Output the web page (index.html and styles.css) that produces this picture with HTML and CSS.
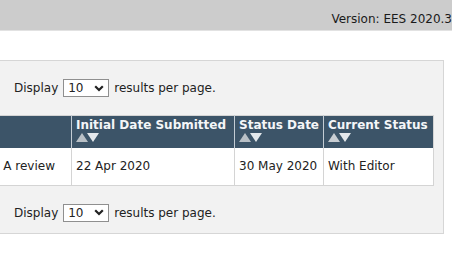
FILE: index.html
```html
<!DOCTYPE html>
<html lang="en">
<head>
    <meta charset="UTF-8">
    <meta name="viewport" content="width=device-width, initial-scale=1.0">
    <title>Submissions</title>
    <link rel="stylesheet" href="styles.css">
</head>
<body>
    <div class="topbar">
        <span class="version">Version: EES 2020.3</span>
    </div>

    <div class="panel">
        <div class="display-row">
            <span>Display</span>
            <span class="fake-select">10
                <svg width="10" height="7" viewBox="0 0 10 7"><path d="M1.2 1.2 L5 5 L8.8 1.2" fill="none" stroke="#222" stroke-width="2.2"/></svg>
            </span>
            <span>results per page.</span>
        </div>

        <table class="results">
            <colgroup>
                <col class="w-status">
                <col class="w-initial">
                <col class="w-date">
                <col class="w-current">
            </colgroup>
            <tr>
                <th></th>
                <th>Initial Date Submitted<div class="sort"><span class="up"></span><span class="down"></span></div></th>
                <th>Status Date<div class="sort"><span class="up"></span><span class="down"></span></div></th>
                <th>Current Status<div class="sort"><span class="up active"></span><span class="down"></span></div></th>
            </tr>
            <tr>
                <td class="status-long">A review</td>
                <td>22 Apr 2020</td>
                <td>30 May 2020</td>
                <td>With Editor</td>
            </tr>
        </table>

        <div class="display-row">
            <span>Display</span>
            <span class="fake-select">10
                <svg width="10" height="7" viewBox="0 0 10 7"><path d="M1.2 1.2 L5 5 L8.8 1.2" fill="none" stroke="#222" stroke-width="2.2"/></svg>
            </span>
            <span>results per page.</span>
        </div>
    </div>
</body>
</html>
```

FILE: styles.css
```css
body {
    margin: 0;
    font-family: "DejaVu Sans", Verdana, sans-serif;
    font-size: 12px;
    color: #222;
    background: #fff;
    overflow: hidden;
}
.topbar {
    height: 30px;
    background: #cccccc;
    border-bottom: 1px solid #e2e2e2;
    display: flex;
    justify-content: flex-end;
    white-space: nowrap;
}
.version {
    padding-top: 12px;
    color: #1a1a1a;
}
.panel {
    box-sizing: border-box;
    width: 466px;
    margin: 29px 0 0 -22px;
    padding: 0 10px 11px;
    background: #f2f2f2;
    border: 1px solid #d6d6d6;
}
.display-row {
    display: flex;
    align-items: center;
    height: 18px;
    margin: 18px 0 18px 25px;
    white-space: nowrap;
}
.results + .display-row {
    margin-bottom: 0;
}
.fake-select {
    box-sizing: border-box;
    width: 46px;
    height: 18px;
    margin: 0 5px;
    padding: 0 4px;
    display: flex;
    align-items: center;
    justify-content: space-between;
    background: #fff;
    border: 1px solid #8f8f8f;
}
.results {
    width: 444px;
    table-layout: fixed;
    border-collapse: collapse;
    background: #fff;
    border: 1px solid #d4d4d4;
}
.w-status { width: 82px; }
.w-initial { width: 163px; }
.w-date { width: 89px; }
.w-current { width: 110px; }
.results th {
    height: 32px;
    box-sizing: border-box;
    padding: 2px 4px 3px;
    background: #3c5468;
    color: #f4f6f8;
    font-weight: bold;
    text-align: left;
    vertical-align: top;
    border-left: 1px solid #c3ccd4;
    white-space: nowrap;
    overflow: hidden;
}
.results th:first-child {
    border-left: none;
}
.results td {
    height: 37px;
    padding: 0 4px;
    border-left: 1px solid #d4d4d4;
    white-space: nowrap;
}
.results td:first-child {
    border-left: none;
}
.results td.status-long {
    text-align: right;
    padding-right: 16px;
}
.sort {
    display: flex;
    margin-top: 1px;
}
.sort span {
    width: 0;
    height: 0;
    border-left: 6px solid transparent;
    border-right: 6px solid transparent;
}
.sort .up {
    border-bottom: 9px solid #b9c0c6;
    margin-right: -1px;
}
.sort .down {
    border-top: 9px solid #e4e8ec;
}
.sort .up.active {
    border-bottom-color: #c8cdd2;
}
```
